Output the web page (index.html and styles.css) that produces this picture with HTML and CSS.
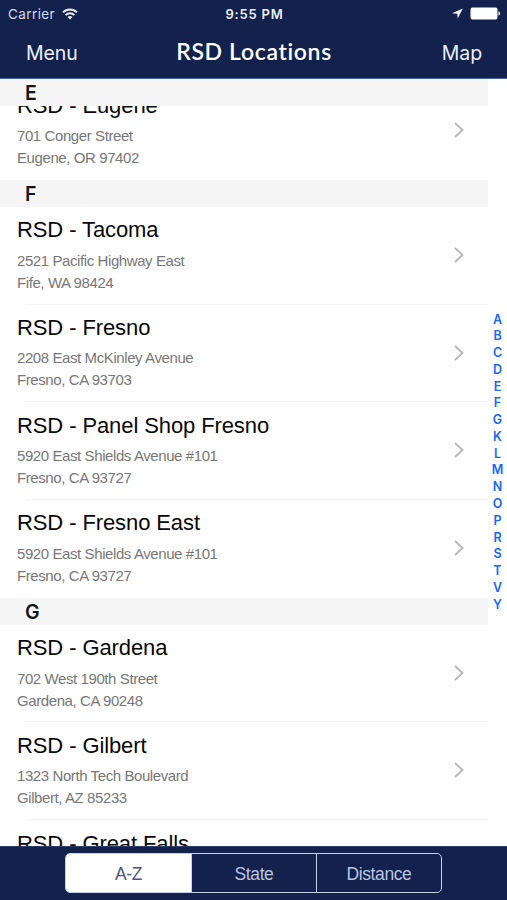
FILE: index.html
```html
<!DOCTYPE html>
<html lang="en">
<head>
<meta charset="utf-8">
<title>RSD Locations</title>
<link rel="stylesheet" href="styles.css">
</head>
<body>
<div class="app">
  <header class="top">
    <div class="status">
      <div class="carrier"><span>Carrier</span>
        <svg width="16" height="12" viewBox="0 0 16 12" fill="none" stroke="#e6eefb" stroke-width="1.9"><path d="M1 4.4a10 10 0 0 1 14 0M3.6 7.1a6.2 6.2 0 0 1 8.8 0"/><path d="M5.6 9.1a3.4 3.4 0 0 1 4.8 0L8 11.6z" fill="#e6eefb" stroke="none"/></svg>
      </div>
      <div class="time">9:55 PM</div>
      <div class="power">
        <svg width="11" height="11" viewBox="0 0 11 11"><path d="M10.8.5 0 5.2l5.3.6.4 4.7z" fill="#f2f6fd"/></svg>
        <svg width="31" height="13" viewBox="0 0 31 13" fill="#fff"><rect x=".5" y=".5" width="27" height="12" rx="2"/><path d="M28.5 4.3c2 .5 2 3.9 0 4.4z"/></svg>
      </div>
    </div>
    <nav class="nav"><span class="menu">Menu</span><h1>RSD Locations</h1><span class="map">Map</span></nav>
  </header>
  <main class="body">
    <div class="list">
      <section class="group scrolled">
        <h2>E</h2>
        <article><div><h3>RSD - Eugene</h3><p>701 Conger Street</p><p>Eugene, OR 97402</p></div><svg class="chev" viewBox="0 0 10 16"><path d="M1 1l7.5 7L1 15"/></svg></article>
      </section>
      <section class="group">
        <h2>F</h2>
        <article><div><h3>RSD - Tacoma</h3><p>2521 Pacific Highway East</p><p>Fife, WA 98424</p></div><svg class="chev" viewBox="0 0 10 16"><path d="M1 1l7.5 7L1 15"/></svg></article>
        <article><div><h3>RSD - Fresno</h3><p>2208 East McKinley Avenue</p><p>Fresno, CA 93703</p></div><svg class="chev" viewBox="0 0 10 16"><path d="M1 1l7.5 7L1 15"/></svg></article>
        <article><div><h3>RSD - Panel Shop Fresno</h3><p>5920 East Shields Avenue #101</p><p>Fresno, CA 93727</p></div><svg class="chev" viewBox="0 0 10 16"><path d="M1 1l7.5 7L1 15"/></svg></article>
        <article><div><h3>RSD - Fresno East</h3><p>5920 East Shields Avenue #101</p><p>Fresno, CA 93727</p></div><svg class="chev" viewBox="0 0 10 16"><path d="M1 1l7.5 7L1 15"/></svg></article>
      </section>
      <section class="group">
        <h2>G</h2>
        <article><div><h3>RSD - Gardena</h3><p>702 West 190th Street</p><p>Gardena, CA 90248</p></div><svg class="chev" viewBox="0 0 10 16"><path d="M1 1l7.5 7L1 15"/></svg></article>
        <article><div><h3>RSD - Gilbert</h3><p>1323 North Tech Boulevard</p><p>Gilbert, AZ 85233</p></div><svg class="chev" viewBox="0 0 10 16"><path d="M1 1l7.5 7L1 15"/></svg></article>
        <article><div><h3>RSD - Great Falls</h3></div></article>
      </section>
    </div>
    <aside class="index"><span>A</span><span>B</span><span>C</span><span>D</span><span>E</span><span>F</span><span>G</span><span>K</span><span>L</span><span>M</span><span>N</span><span>O</span><span>P</span><span>R</span><span>S</span><span>T</span><span>V</span><span>Y</span></aside>
  </main>
  <footer class="bottom">
    <div class="tabs"><span class="on">A-Z</span><span>State</span><span>Distance</span></div>
  </footer>
</div>
</body>
</html>
```
FILE: styles.css
```css
* { box-sizing: border-box; margin: 0; padding: 0; }
body { background: #fff; font-family: "Liberation Sans", sans-serif; overflow: hidden; }
.app { width: 507px; height: 900px; display: flex; flex-direction: column; }
.top { height: 79px; flex: none; background: #13214d; border-bottom: 1px solid #4d6691; color: #e9f0fb; font-family: Inter, sans-serif; }
.status { display: grid; grid-template-columns: 1fr auto 1fr; align-items: center; height: 27px; padding: 0 6px 0 8px; font-size: 13.5px; }
.carrier { display: flex; align-items: center; gap: 7px; color: #cfdaf0; letter-spacing: .4px; }
.time { font-weight: 600; font-size: 13px; letter-spacing: .8px; }
.power { display: flex; justify-content: flex-end; align-items: center; gap: 7px; }
.nav { display: grid; grid-template-columns: 1fr auto 1fr; align-items: center; height: 50px; padding: 1px 25px 0 26px; font-size: 19.5px; letter-spacing: -.1px; }
.nav h1 { font: 600 23px/30px Lato, sans-serif; letter-spacing: .65px; color: #fff; margin-top: -3px; }
.map { text-align: right; }
.body { flex: 1; min-height: 0; display: flex; overflow: hidden; }
.list { width: 488px; height: 767px; overflow: hidden; }
.group h2 { height: 27px; padding-left: 25px; background: #f5f5f5; font: 600 19.5px/28px Inter, sans-serif; color: #151515; }
.scrolled h2 { position: relative; z-index: 1; }
.scrolled article { margin-top: -23.7px; }
article { display: flex; justify-content: space-between; height: 97.7px; padding: 10.4px 24px 0 17px; background: linear-gradient(#f3f3f3, #f3f3f3) 26px 100% / 100% 1px no-repeat; }
article:last-child { background: none; }
h3 { font-size: 22px; line-height: 25px; font-weight: 400; color: #080808; margin-bottom: 7.4px; letter-spacing: -.1px; white-space: nowrap; }
p { font-size: 15px; line-height: 22px; color: #777; letter-spacing: -.41px; white-space: nowrap; }
.chev { width: 10px; height: 16px; margin-top: 29.6px; fill: none; stroke: #b8b8b8; stroke-width: 1.9; }
.index { width: 19px; padding-top: 232.6px; display: flex; flex-direction: column; align-items: center; color: #1668f5; font: 600 12.5px/16.78px Inter, sans-serif; }
.index span { flex: none; height: 16.78px; }
.bottom { height: 54px; flex: none; background: #13214d; border-top: 1px solid #2c3d68; display: flex; justify-content: center; padding-top: 6px; }
.tabs { width: 377px; height: 40px; display: grid; grid-template-columns: 1fr 1fr 1fr; border: 1.5px solid #c3d2ec; border-radius: 5px; overflow: hidden; color: #b9c6e2; font-size: 17.5px; line-height: 40px; text-align: center; letter-spacing: -.4px; }
.tabs span + span { border-left: 1px solid #c3d2ec; }
.tabs .on { background: #fff; color: #4c5483; }
```
